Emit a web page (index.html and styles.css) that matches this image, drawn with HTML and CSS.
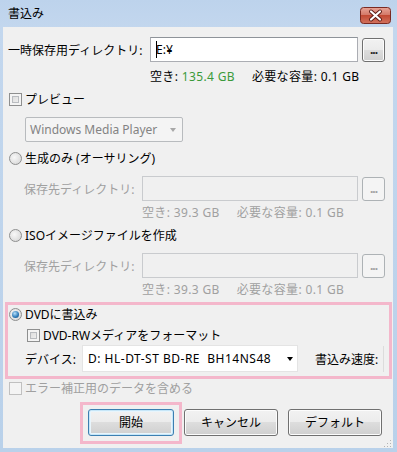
FILE: index.html
```html
<!DOCTYPE html>
<html lang="ja">
<head>
  <meta charset="UTF-8" />
  <title>書込み</title>
  <link rel="stylesheet" href="styles.css">
</head>
<body>
  <div class="window">
    <div class="titlebar">
      <span class="title">書込み</span>
      <span class="close-btn">
        <svg width="31" height="17" viewBox="0 0 31 17">
          <defs>
            <linearGradient id="cg" x1="0" y1="0" x2="0" y2="1">
              <stop offset="0" stop-color="#e8a497"/>
              <stop offset="0.45" stop-color="#d47a6a"/>
              <stop offset="0.5" stop-color="#c24a34"/>
              <stop offset="1" stop-color="#d2735f"/>
            </linearGradient>
          </defs>
          <rect x="0.5" y="0.5" width="30" height="16" rx="3" fill="url(#cg)" stroke="#7a2a22"/>
          <path d="M11 4.5 L20 12.5 M20 4.5 L11 12.5" stroke="#5a1a14" stroke-width="4" stroke-linecap="round"/>
          <path d="M11 4.5 L20 12.5 M20 4.5 L11 12.5" stroke="#ffffff" stroke-width="2.2" stroke-linecap="round"/>
        </svg>
      </span>
    </div>

    <div class="client">
      <div class="dir-row">
        <span class="dir-label">一時保存用ディレクトリ:</span>
        <div class="textbox"><span class="caret"></span>E:¥</div>
        <span class="browse">...</span>
      </div>
      <div class="space-info main-info">
        <span>空き: <span class="free-ok">135.4 GB</span></span>
        <span>必要な容量: 0.1 GB</span>
      </div>

      <div class="option">
        <span class="check"></span>
        <span>プレビュー</span>
      </div>
      <div class="combo disabled">
        <span>Windows Media Player</span>
        <span class="arrow"></span>
      </div>

      <div class="option">
        <span class="radio"></span>
        <span>生成のみ (オーサリング)</span>
      </div>
      <div class="dir-row sub disabled">
        <span class="dir-label">保存先ディレクトリ:</span>
        <div class="textbox"></div>
        <span class="browse">...</span>
      </div>
      <div class="space-info sub-info disabled">
        <span>空き: 39.3 GB</span>
        <span>必要な容量: 0.1 GB</span>
      </div>

      <div class="option">
        <span class="radio"></span>
        <span>ISOイメージファイルを作成</span>
      </div>
      <div class="dir-row sub disabled">
        <span class="dir-label">保存先ディレクトリ:</span>
        <div class="textbox"></div>
        <span class="browse">...</span>
      </div>
      <div class="space-info sub-info disabled">
        <span>空き: 39.3 GB</span>
        <span>必要な容量: 0.1 GB</span>
      </div>

      <div class="dvd-box">
        <div class="option">
          <span class="radio checked"></span>
          <span>DVDに書込み</span>
        </div>
        <div class="option format">
          <span class="check"></span>
          <span>DVD-RWメディアをフォーマット</span>
        </div>
        <div class="device-row">
          <span class="device-label">デバイス:</span>
          <div class="device-combo">
            <span class="device-name">D: HL-DT-ST BD-RE&nbsp; BH14NS48</span>
            <span class="arrow"></span>
          </div>
          <span class="speed-label">書込み速度:</span>
          <span class="speed-edge"></span>
        </div>
      </div>

      <div class="option error disabled">
        <span class="check"></span>
        <span>エラー補正用のデータを含める</span>
      </div>

      <div class="buttons">
        <span class="mark"><span class="btn default">開始</span></span>
        <span class="btn cancel">キャンセル</span>
        <span class="btn">デフォルト</span>
      </div>

      <svg class="grip" width="9" height="9" viewBox="0 0 9 9">
        <rect x="7" y="1" width="1" height="1" fill="#b4b4b4"/>
        <rect x="4" y="4" width="1" height="1" fill="#b4b4b4"/>
        <rect x="7" y="4" width="1" height="1" fill="#b4b4b4"/>
        <rect x="1" y="7" width="1" height="1" fill="#b4b4b4"/>
        <rect x="4" y="7" width="1" height="1" fill="#b4b4b4"/>
        <rect x="7" y="7" width="1" height="1" fill="#b4b4b4"/>
      </svg>
    </div>
  </div>
</body>
</html>
```

FILE: styles.css
```css
* {
  margin: 0;
  padding: 0;
  box-sizing: border-box;
}

body {
  font-family: "Noto Sans", "Noto Sans CJK JP", sans-serif;
  font-size: 12px;
  color: #000;
  background: #fff;
}

.window {
  width: 397px;
  height: 452px;
  display: flex;
  flex-direction: column;
  background: linear-gradient(#bdd3ec, #c3d7ee 30px, #b9d1ea);
}

.titlebar {
  height: 27px;
  display: flex;
  justify-content: space-between;
  padding: 0 6px 0 8px;
}

.title {
  line-height: 27px;
}

.close-btn {
  margin-top: 7px;
  height: 17px;
}

.close-btn svg {
  display: block;
}

.client {
  position: relative;
  flex: 1;
  margin: 0 4px 4px 3px;
  padding: 0 8px 0 5px;
  background: #f0f0f0;
  display: flex;
  flex-direction: column;
}

.disabled {
  color: #a0a0a0;
}

/* directory rows */
.dir-row {
  display: flex;
  align-items: center;
  height: 25px;
  margin-top: 10px;
}

.dir-row.sub {
  margin-top: 11px;
  padding-left: 16px;
}

.dir-label {
  width: 142px;
  white-space: nowrap;
}

.sub .dir-label {
  width: 118px;
}

.textbox {
  flex: 1;
  height: 25px;
  background: #fff;
  border: 1px solid #abadb3;
  border-top-color: #8e9399;
  display: flex;
  align-items: center;
  padding-left: 5px;
}

.disabled .textbox {
  background: #f0f0f0;
  border-color: #c9cbce;
}

.caret {
  display: inline-block;
  width: 1px;
  height: 17px;
  background: #000;
  margin-right: -1px;
}

.browse {
  width: 23px;
  height: 24px;
  margin-left: 4px;
  border: 1px solid #707070;
  border-radius: 3px;
  background: linear-gradient(#f2f2f2, #ebebeb 50%, #dddddd 50%, #cfcfcf);
  box-shadow: inset 0 0 0 1px #fcfcfc;
  text-align: center;
  line-height: 22px;
  font-weight: bold;
  letter-spacing: -1px;
  color: #222;
}

.disabled .browse {
  border-color: #adb2b5;
  background: #f4f4f4;
  box-shadow: none;
  color: #a0a0a0;
}

.space-info {
  height: 14px;
  line-height: 14px;
  display: flex;
  gap: 17px;
  letter-spacing: 0.35px;
  white-space: nowrap;
}

.main-info {
  margin-top: 8px;
  padding-left: 142px;
}

.sub-info {
  margin-top: 5px;
  padding-left: 134px;
}

.free-ok {
  color: #3a9a3a;
}

/* radios & checkboxes */
.option {
  display: flex;
  align-items: center;
  height: 14px;
  margin-top: 9px;
  white-space: nowrap;
  padding-left: 1px;
}

.option .check,
.option .radio {
  margin-right: 3px;
}

.option + .combo {
  margin-top: 11px;
}

.combo.disabled + .option {
  margin-top: 9px;
}

.dir-row + .space-info + .option {
  margin-top: 8px;
}

.sub-info + .option {
  margin-top: 11px;
}

.check {
  display: inline-block;
  width: 13px;
  height: 13px;
  border: 1px solid #8e8f8f;
  background: linear-gradient(135deg, #d6d6d6, #f6f6f6);
  box-shadow: inset 0 0 0 2px #f4f4f4, inset 0 0 0 3px #b9bcc0;
}

.disabled .check {
  border-color: #c0c0c0;
  background: #f4f4f4;
  box-shadow: none;
}

.radio {
  display: inline-block;
  width: 13px;
  height: 13px;
  border-radius: 50%;
  border: 1px solid #8e8f8f;
  background: radial-gradient(circle at 40% 40%, #f8f8f8, #d2d2d2);
  position: relative;
}

.radio.checked::after {
  content: "";
  position: absolute;
  left: 2px;
  top: 2px;
  width: 7px;
  height: 7px;
  border-radius: 50%;
  background: radial-gradient(circle at 40% 35%, #b6e0fb, #2a77b5 60%, #1b4d7a);
}

/* combos */
.combo {
  width: 158px;
  height: 25px;
  margin-left: 17px;
  border: 1px solid #b8bbbe;
  border-radius: 2px;
  background: #f4f4f4;
  display: flex;
  align-items: center;
  justify-content: space-between;
  padding: 0 6px 0 4px;
  color: #838383;
}

.arrow {
  width: 0;
  height: 0;
  border-left: 3.5px solid transparent;
  border-right: 3.5px solid transparent;
  border-top: 4px solid #000;
}

.combo .arrow {
  border-top-color: #a8a8a8;
}

/* DVD section */
.dvd-box {
  margin: 5px -7px 0 -3px;
  border: 3px solid #f4b7cb;
  padding: 2px 0 4px 1px;
}

.dvd-box .option {
  margin-top: 0;
  padding-left: 0;
}

.dvd-box .format {
  margin-top: 7px;
  padding-left: 18px;
}

.device-row {
  display: flex;
  align-items: center;
  height: 27px;
  margin-top: 3px;
  padding-left: 16px;
  white-space: nowrap;
}

.device-label {
  width: 57px;
}

.device-combo {
  width: 216px;
  height: 27px;
  background: #fff;
  border: 1px solid #e4e4e4;
  display: flex;
  align-items: center;
  justify-content: space-between;
  padding: 0 4px 0 5px;
}

.device-name {
  letter-spacing: 0.5px;
}

.speed-label {
  margin-left: 17px;
}

.speed-edge {
  width: 1px;
  height: 26px;
  margin-left: 5px;
  background: #dcdcdc;
}

.option.error {
  margin-top: 2px;
  padding-left: 1px;
}

/* buttons */
.buttons {
  display: flex;
  justify-content: flex-end;
  align-items: flex-start;
  margin-top: 7px;
  padding-right: 3px;
}

.mark {
  border: 3px solid #f4b7cb;
  padding: 4px 5px 5px 5px;
}

.btn {
  display: block;
  width: 94px;
  height: 27px;
  border: 1px solid #707070;
  border-radius: 3px;
  background: linear-gradient(#f2f2f2, #ebebeb 50%, #dddddd 50%, #cfcfcf);
  box-shadow: inset 0 0 0 1px #fcfcfc;
  text-align: center;
  line-height: 25px;
  margin-left: 10px;
  margin-top: 7px;
}

.mark .btn {
  width: 86px;
  margin: 0;
  border-color: #3c7fb1;
  box-shadow: inset 0 0 0 1px #c6e6f8, inset 0 0 0 2px #e8f5fc;
}

.btn.cancel {
  margin-left: 2px;
}

.grip {
  position: absolute;
  right: 1px;
  bottom: 0;
}
```
